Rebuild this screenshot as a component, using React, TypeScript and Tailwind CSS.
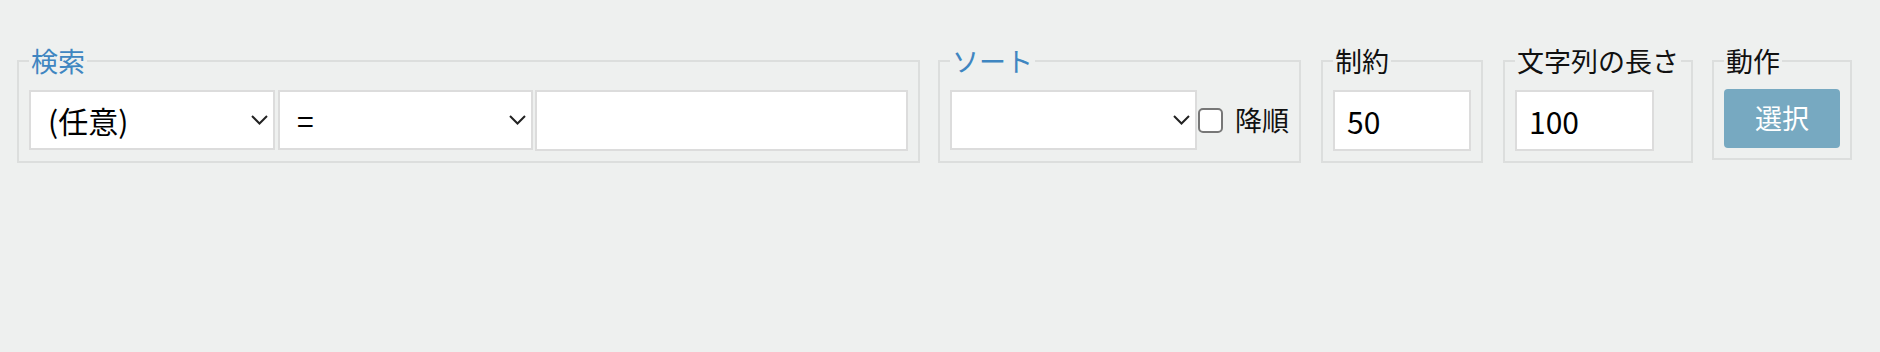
import React from "react";

const FONT = { fontFamily: '"Noto Sans CJK JP", "Noto Sans", sans-serif' };

function Chevron() {
  return (
    <svg
      width="17"
      height="10"
      viewBox="0 0 17 10"
      className="pointer-events-none absolute right-[7px] top-1/2 -translate-y-1/2"
    >
      <polyline points="1,1 8.5,8.5 16,1" fill="none" stroke="#222" strokeWidth="2" />
    </svg>
  );
}

function Select({ width, value }: { width: string; value: string }) {
  return (
    <div className={`relative ${width}`}>
      <select
        defaultValue={value}
        className="h-[60px] w-full appearance-none rounded-none border-2 border-[#dcdcdc] bg-white pl-[17px] pr-8 text-[30px] text-black outline-none"
        style={FONT}
      >
        <option value={value}>{value}</option>
      </select>
      <Chevron />
    </div>
  );
}

function Box({
  legend,
  blue,
  className,
  children,
}: {
  legend: string;
  blue?: boolean;
  className?: string;
  children: React.ReactNode;
}) {
  return (
    <fieldset className={`shrink-0 border-2 border-[#dcdedd] px-[10px] pt-[14px] pb-[10px] ${className ?? ""}`}>
      <legend className={`px-[2px] text-[27px] leading-[31px] ${blue ? "text-[#3f86c1]" : "text-[#111]"}`}>
        {legend}
      </legend>
      {children}
    </fieldset>
  );
}

export default function App() {
  return (
    <div className="h-[352px] w-[1880px] bg-[#eef0ef] pl-[17px] pt-[45px]" style={FONT}>
      <div className="flex items-start">
        {/* 検索 */}
        <Box legend="検索" blue>
          <div className="flex items-start">
            <Select width="w-[246px]" value="(任意)" />
            <div className="ml-[3px]">
              <Select width="w-[255px]" value="=" />
            </div>
            <input
              type="text"
              readOnly
              className="ml-[2px] h-[61px] w-[373px] border-2 border-[#dcdcdc] bg-white px-3 text-[30px] outline-none"
              style={FONT}
            />
          </div>
        </Box>

        {/* ソート */}
        <Box legend="ソート" blue className="ml-[18px]">
          <div className="flex h-[61px] items-start">
            <Select width="w-[247px]" value="" />
            <div className="ml-px flex h-[60px] items-center">
              <span className="h-[25px] w-[25px] rounded-[5px] border-2 border-[#777] bg-white" />
              <span className="ml-[12px] text-[27px] text-[#111]">降順</span>
            </div>
          </div>
        </Box>

        {/* 制約 */}
        <Box legend="制約" className="ml-[20px]">
          <input
            type="text"
            readOnly
            value="50"
            className="block h-[61px] w-[138px] border-2 border-[#dcdcdc] bg-white px-3 text-[30px] text-black outline-none"
            style={FONT}
          />
        </Box>

        {/* 文字列の長さ */}
        <Box legend="文字列の長さ" className="ml-[20px]">
          <input
            type="text"
            readOnly
            value="100"
            className="block h-[61px] w-[139px] border-2 border-[#dcdcdc] bg-white px-3 text-[30px] text-black outline-none"
            style={FONT}
          />
        </Box>

        {/* 動作 */}
        <Box legend="動作" className="ml-[19px]">
          <button
            type="button"
            className="-mt-px block h-[59px] w-[116px] rounded-[4px] bg-[#77a9c1] text-[27px] text-white"
            style={FONT}
          >
            選択
          </button>
        </Box>
      </div>
    </div>
  );
}
